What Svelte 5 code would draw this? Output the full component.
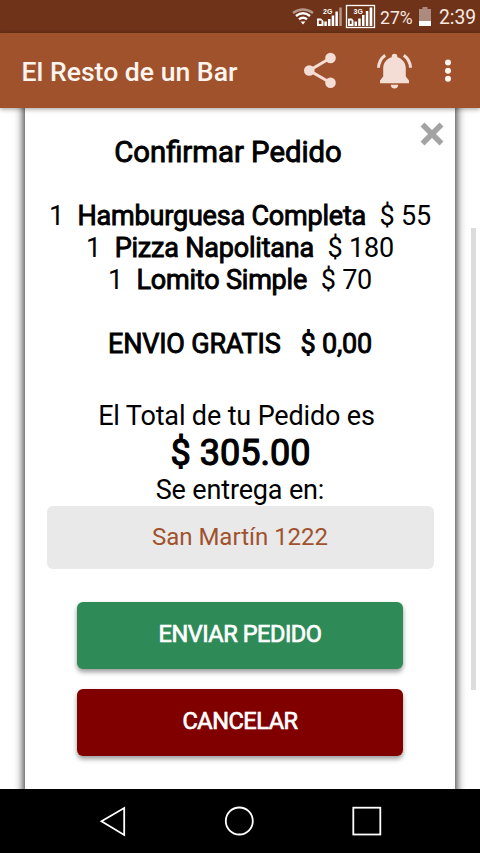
<script>
	const items = [
		{ qty: 1, name: 'Hamburguesa Completa', price: 55 },
		{ qty: 1, name: 'Pizza Napolitana', price: 180 },
		{ qty: 1, name: 'Lomito Simple', price: 70 }
	];

	const total = items.reduce((sum, item) => sum + item.qty * item.price, 0);
	const address = 'San Martín 1222';
</script>

<div class="phone">
	<div class="status">
		<svg width="84" height="33" viewBox="0 0 84 33">
			<!-- wifi -->
			<g fill="none" stroke="#fff" stroke-width="2.4">
				<path d="M1 13 Q11 6 21 13" stroke="#b5978a" />
				<path d="M4 16 Q11 10.500 18 16" />
				<path d="M7 19.300 Q11 16.200 15 19.300" />
			</g>
			<path d="M8.500 21.500h5L11 24.500z" fill="#fff" />
			<!-- sim 1 -->
			<g fill="#fff">
				<path d="M25 18.500h4l2.500 2.500v5H25zM26.800 20.500v3.500h2.700v-3.500z" fill-rule="evenodd" />
				<rect x="32.300" y="21.500" width="2.500" height="4.500" />
				<rect x="36" y="19" width="2.500" height="7" />
				<rect x="39.700" y="15.500" width="2.500" height="10.500" />
				<rect x="43.400" y="11.500" width="2.500" height="14.500" />
				<rect x="47.300" y="7.500" width="2.500" height="18.500" fill="#b5978a" />
				<text x="31" y="14">2G</text>
			</g>
			<!-- sim 2 -->
			<g fill="#fff">
				<rect x="54.500" y="5.500" width="28" height="22" fill="none" stroke="#fff" stroke-width="1.300" />
				<path d="M56 18.500h4l1.500 2v5.500H56zM57.800 20.500v3.500h1.800v-3.500z" fill-rule="evenodd" />
				<rect x="62.500" y="21.500" width="2.500" height="4.500" />
				<rect x="66.200" y="18.500" width="2.500" height="7.500" />
				<rect x="70" y="15" width="2.500" height="11" />
				<rect x="73.800" y="11" width="2.500" height="15" />
				<rect x="77.600" y="7.500" width="2.700" height="18.500" />
				<text x="61.500" y="14">3G</text>
			</g>
		</svg>
		<span class="percent">27%</span>
		<svg class="battery" width="12" height="19" viewBox="0 0 12 19">
			<path d="M3.500 0h5v2H12v12H0V2h3.500z" fill="#ac8b7e" />
			<path d="M0 14h12v5H0z" fill="#fff" />
		</svg>
		<span class="clock">2:39</span>
	</div>

	<header>
		<h1>El Resto de un Bar</h1>
		<svg width="156" height="75" viewBox="300 33 156 75" fill="#f3ddd4">
			<path d="M330.500 58L309.300 70.500L330.500 82.800" fill="none" stroke="#f3ddd4" stroke-width="3" />
			<circle cx="330.500" cy="58" r="5.300" />
			<circle cx="309.300" cy="70.500" r="5.300" />
			<circle cx="330.500" cy="82.800" r="5.300" />
			<path d="M391.700 57.200v-.7a2.800 2.800 0 0 1 5.600 0v.7c5 1.300 8.500 5.600 8.500 11v8.300l3.200 4v2.700h-29v-2.700l3.200-4V68.200c0-5.400 3.500-9.700 8.500-11z" />
			<path d="M390.800 84.700h7.400a3.700 3.700 0 0 1-7.400 0z" />
			<path d="M378.500 67.800q.4-8 6.700-12.600M410.500 67.800q-.4-8-6.700-12.600" fill="none" stroke="#f3ddd4" stroke-width="3" />
			<g fill="#fff5ef">
				<circle cx="448" cy="62.600" r="3" />
				<circle cx="448" cy="70.700" r="3" />
				<circle cx="448" cy="78.700" r="3" />
			</g>
		</svg>
	</header>

	<main>
		<section class="card">
			<svg class="close" width="24" height="24" viewBox="0 0 24 24">
				<path d="M2.500 2.500l19 19M21.500 2.500l-19 19" stroke="#a3a3a3" stroke-width="5.500" />
			</svg>
			<h2>Confirmar Pedido</h2>

			<ul>
				{#each items as item}
					<li>
						<span>{item.qty}</span>
						<b>{item.name}</b>
						<span>$ {item.price}</span>
					</li>
				{/each}
			</ul>

			<p class="shipping"><b>ENVIO GRATIS</b><b>$ 0,00</b></p>

			<p class="label">El Total de tu Pedido es</p>
			<p class="total">$ {total.toFixed(2)}</p>
			<p class="deliver">Se entrega en:</p>
			<div class="address">{address}</div>

			<button class="send">ENVIAR PEDIDO</button>
			<button class="cancel">CANCELAR</button>
		</section>
		<div class="scrollbar"></div>
	</main>

	<nav>
		<svg width="480" height="64" viewBox="0 0 480 64" fill="none" stroke="#fff" stroke-width="1.800">
			<path d="M124.200 19v27L101.500 32.300z" />
			<circle cx="239.300" cy="32" r="13.500" />
			<rect x="353.300" y="18.700" width="27" height="26.800" />
		</svg>
	</nav>
</div>

<style>
	:global(body) {
		margin: 0;
		background: #fff;
	}

	.phone {
		display: flex;
		flex-direction: column;
		width: 480px;
		height: 853px;
		overflow: hidden;
		font-family: Roboto, "Liberation Sans", sans-serif;
		color: #000;
	}

	.status {
		display: flex;
		align-items: center;
		height: 33px;
		box-sizing: border-box;
		padding-left: 292px;
		background: #6f3319;
		color: #f8e9e2;
	}

	.status text {
		font-family: "Liberation Sans", sans-serif;
		font-size: 7px;
		font-weight: 700;
	}

	.percent {
		width: 34px;
		margin-left: 4px;
		font-size: 17.6px;
		padding-top: 2px;
	}

	.battery {
		margin-left: 5px;
	}

	.clock {
		margin-left: 8px;
		padding-top: 2px;
		font-size: 19.3px;
	}

	header {
		display: flex;
		align-items: center;
		justify-content: space-between;
		height: 75px;
		padding: 0 24px 0 21.5px;
		background: #a0522d;
		box-shadow: 0 1px 5px rgba(0, 0, 0, 0.4);
		z-index: 1;
	}

	h1 {
		margin: 2px 0 0;
		font-size: 26.6px;
		font-weight: 500;
		color: #fff5ef;
		white-space: nowrap;
	}

	main {
		position: relative;
		height: 681px;
		overflow: hidden;
	}

	/* the card runs on past the visible area at both ends */
	.card {
		position: relative;
		display: flex;
		flex-direction: column;
		align-items: center;
		width: 430px;
		height: 721px;
		margin: -20px 0 0 25px;
		box-sizing: border-box;
		padding-top: 44px;
		background: #fff;
		box-shadow: 0 0 9px 1px rgba(0, 0, 0, 0.9);
	}

	.close {
		position: absolute;
		top: 34px;
		right: 11px;
	}

	.scrollbar {
		position: absolute;
		right: 4px;
		top: 120px;
		width: 5px;
		height: 462px;
		background: #dcdcdc;
	}

	h2 {
		margin: 0 24px 28px 0;
		font-size: 29.3px;
		line-height: 40px;
		font-weight: 400;
		-webkit-text-stroke: 0.9px #000;
	}

	ul {
		list-style: none;
		margin: 0 0 32px;
		padding: 0;
	}

	li {
		display: flex;
		justify-content: center;
		gap: 13.6px;
		font-size: 27px;
		line-height: 32px;
		letter-spacing: -0.2px;
		white-space: nowrap;
	}

	b {
		font-weight: 400;
		-webkit-text-stroke: 0.9px #000;
	}

	p {
		margin: 0;
		font-size: 27px;
		line-height: 32px;
		letter-spacing: -0.15px;
		white-space: nowrap;
	}

	.shipping {
		display: flex;
		gap: 20px;
		margin-bottom: 40px;
		letter-spacing: -0.2px;
	}

	.label {
		margin-right: 7px;
	}

	.total {
		margin-left: 1px;
		font-size: 36px;
		line-height: 42px;
		letter-spacing: 0;
		-webkit-text-stroke: 1.2px #000;
	}

	.deliver {
		padding-top: 1px;
		line-height: 31px;
	}

	.address {
		width: 387px;
		height: 63px;
		margin-bottom: 33px;
		border-radius: 6px;
		background: #e9e9e9;
		color: #a0522d;
		font-size: 24px;
		line-height: 62px;
		text-align: center;
	}

	button {
		width: 326px;
		height: 67px;
		margin: 0 0 20px;
		padding: 0 0 3px;
		border: 0;
		border-radius: 6px;
		color: #fff;
		font-family: inherit;
		font-size: 23.5px;
		letter-spacing: -0.45px;
		-webkit-text-stroke: 0.7px #fff;
		box-shadow: 0 3px 5px rgba(0, 0, 0, 0.4);
	}

	.send {
		background: #2e8b57;
	}

	.cancel {
		background: #800000;
	}

	nav {
		height: 64px;
		background: #000;
	}
</style>
